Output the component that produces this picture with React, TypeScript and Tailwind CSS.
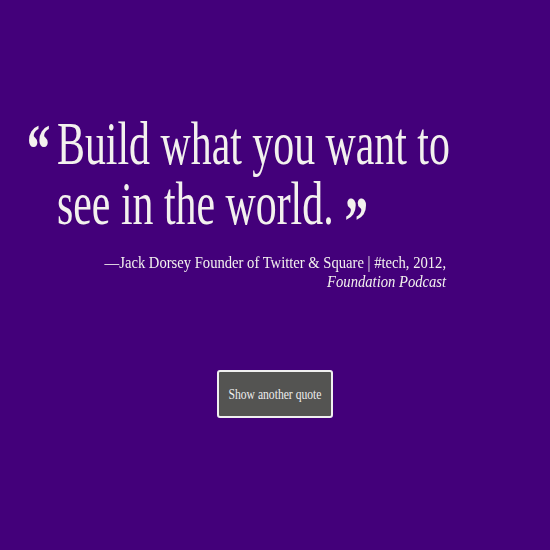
export default function App() {
  return (
    <div className="min-h-screen w-full bg-[#43007a] text-[#f3f1ee] font-['Liberation_Serif',serif]">
      <div className="pt-[113px] pl-[57px]">
        {/* quote */}
        <p className="w-[600px] origin-left scale-x-[0.675] text-[62px] leading-[60px]">
          <span className="relative top-[8px] inline-block ml-[-45px] w-[45px] text-[70px] leading-[0] font-bold">“</span>
          Build what you want to see in the world.
          <span className="relative top-[21px] ml-[16px] text-[70px] leading-[0] font-bold">”</span>
        </p>

        <div className="w-[389px] mt-[20px] flex justify-end">
          <div className="origin-right scale-x-[0.86] text-right text-[17px] leading-[19px] whitespace-nowrap">
            <p>—Jack Dorsey Founder of Twitter &amp; Square | #tech, 2012,</p>
            <p className="italic">Foundation Podcast</p>
          </div>
        </div>
      </div>

      <div className="flex justify-center mt-[79px]">
        <button className="w-[116px] h-[48px] rounded-[3px] border-2 border-[#f0f0f0] bg-[#545452] text-[14px] text-[#eeeeee]">
          <span className="inline-block scale-x-[0.83] whitespace-nowrap">Show another quote</span>
        </button>
      </div>
    </div>
  )
}
